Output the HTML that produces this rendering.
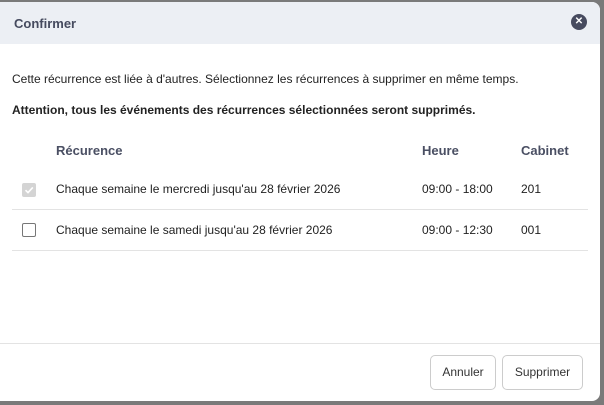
<!DOCTYPE html>
<html><head><meta charset="utf-8"><style>
html,body{margin:0;padding:0;width:604px;height:405px;overflow:hidden;background:#7a7a7a;font-family:"Liberation Sans",Arial,sans-serif;}
.m{position:absolute;left:-10px;top:2px;width:610px;height:399px;background:#fff;border-radius:8px;overflow:hidden;}
.h{position:absolute;left:0;top:0;width:100%;height:42px;background:#eceff4;}
.t{position:absolute;left:24px;top:14px;font-size:13px;font-weight:bold;color:#454a5e;}
.x{position:absolute;left:581px;top:12px;width:16px;height:16px;border-radius:50%;background:#474b5f;color:#fff;font-size:10px;font-weight:bold;text-align:center;line-height:16px;}
.p{position:absolute;left:22px;font-size:12px;color:#222;white-space:nowrap;}
.th{position:absolute;top:141px;font-size:13px;font-weight:bold;color:#4a4f63;}
.c{position:absolute;font-size:12px;color:#222;white-space:nowrap;}
.ln{position:absolute;left:22px;width:576px;height:1px;background:#e3e3e3;}
.cb{position:absolute;left:32px;width:12px;height:12px;border:1px solid #777;border-radius:2px;background:#fff;}
.cb.d{background:#d4d4d4;border-color:#d4d4d4;}
.b{position:absolute;top:353px;height:33px;border:1px solid #ccc;border-radius:5px;font-size:12px;color:#333;text-align:center;line-height:33px;background:#fff;}
</style></head><body>
<div class="m">
<div class="h"><div class="t">Confirmer</div><div class="x">✕</div></div>
<div class="p" style="top:70px">Cette récurrence est liée à d'autres. Sélectionnez les récurrences à supprimer en même temps.</div>
<div class="p" style="top:101px;font-weight:bold">Attention, tous les événements des récurrences sélectionnées seront supprimés.</div>
<div class="th" style="left:66px">Récurence</div>
<div class="th" style="left:432px">Heure</div>
<div class="th" style="left:531px">Cabinet</div>
<div class="cb d" style="top:181px"><svg width="12" height="12" viewBox="0 0 12 12" style="position:absolute;left:0;top:0"><path d="M2.5 6.2 L5 8.6 L9.8 3.4" stroke="#fff" stroke-width="1.6" fill="none"/></svg></div>
<div class="c" style="left:66px;top:180px">Chaque semaine le mercredi jusqu'au 28 février 2026</div>
<div class="c" style="left:432px;top:180px">09:00 - 18:00</div>
<div class="c" style="left:531px;top:180px">201</div>
<div class="ln" style="top:207px"></div>
<div class="cb" style="top:221px"></div>
<div class="c" style="left:66px;top:221px">Chaque semaine le samedi jusqu'au 28 février 2026</div>
<div class="c" style="left:432px;top:221px">09:00 - 12:30</div>
<div class="c" style="left:531px;top:221px">001</div>
<div class="ln" style="top:248px"></div>
<div style="position:absolute;left:0;top:341px;width:100%;height:1px;background:#e3e3e3"></div>
<div class="b" style="left:440px;width:64px">Annuler</div>
<div class="b" style="left:512px;width:79px">Supprimer</div>
</div>
</body></html>
